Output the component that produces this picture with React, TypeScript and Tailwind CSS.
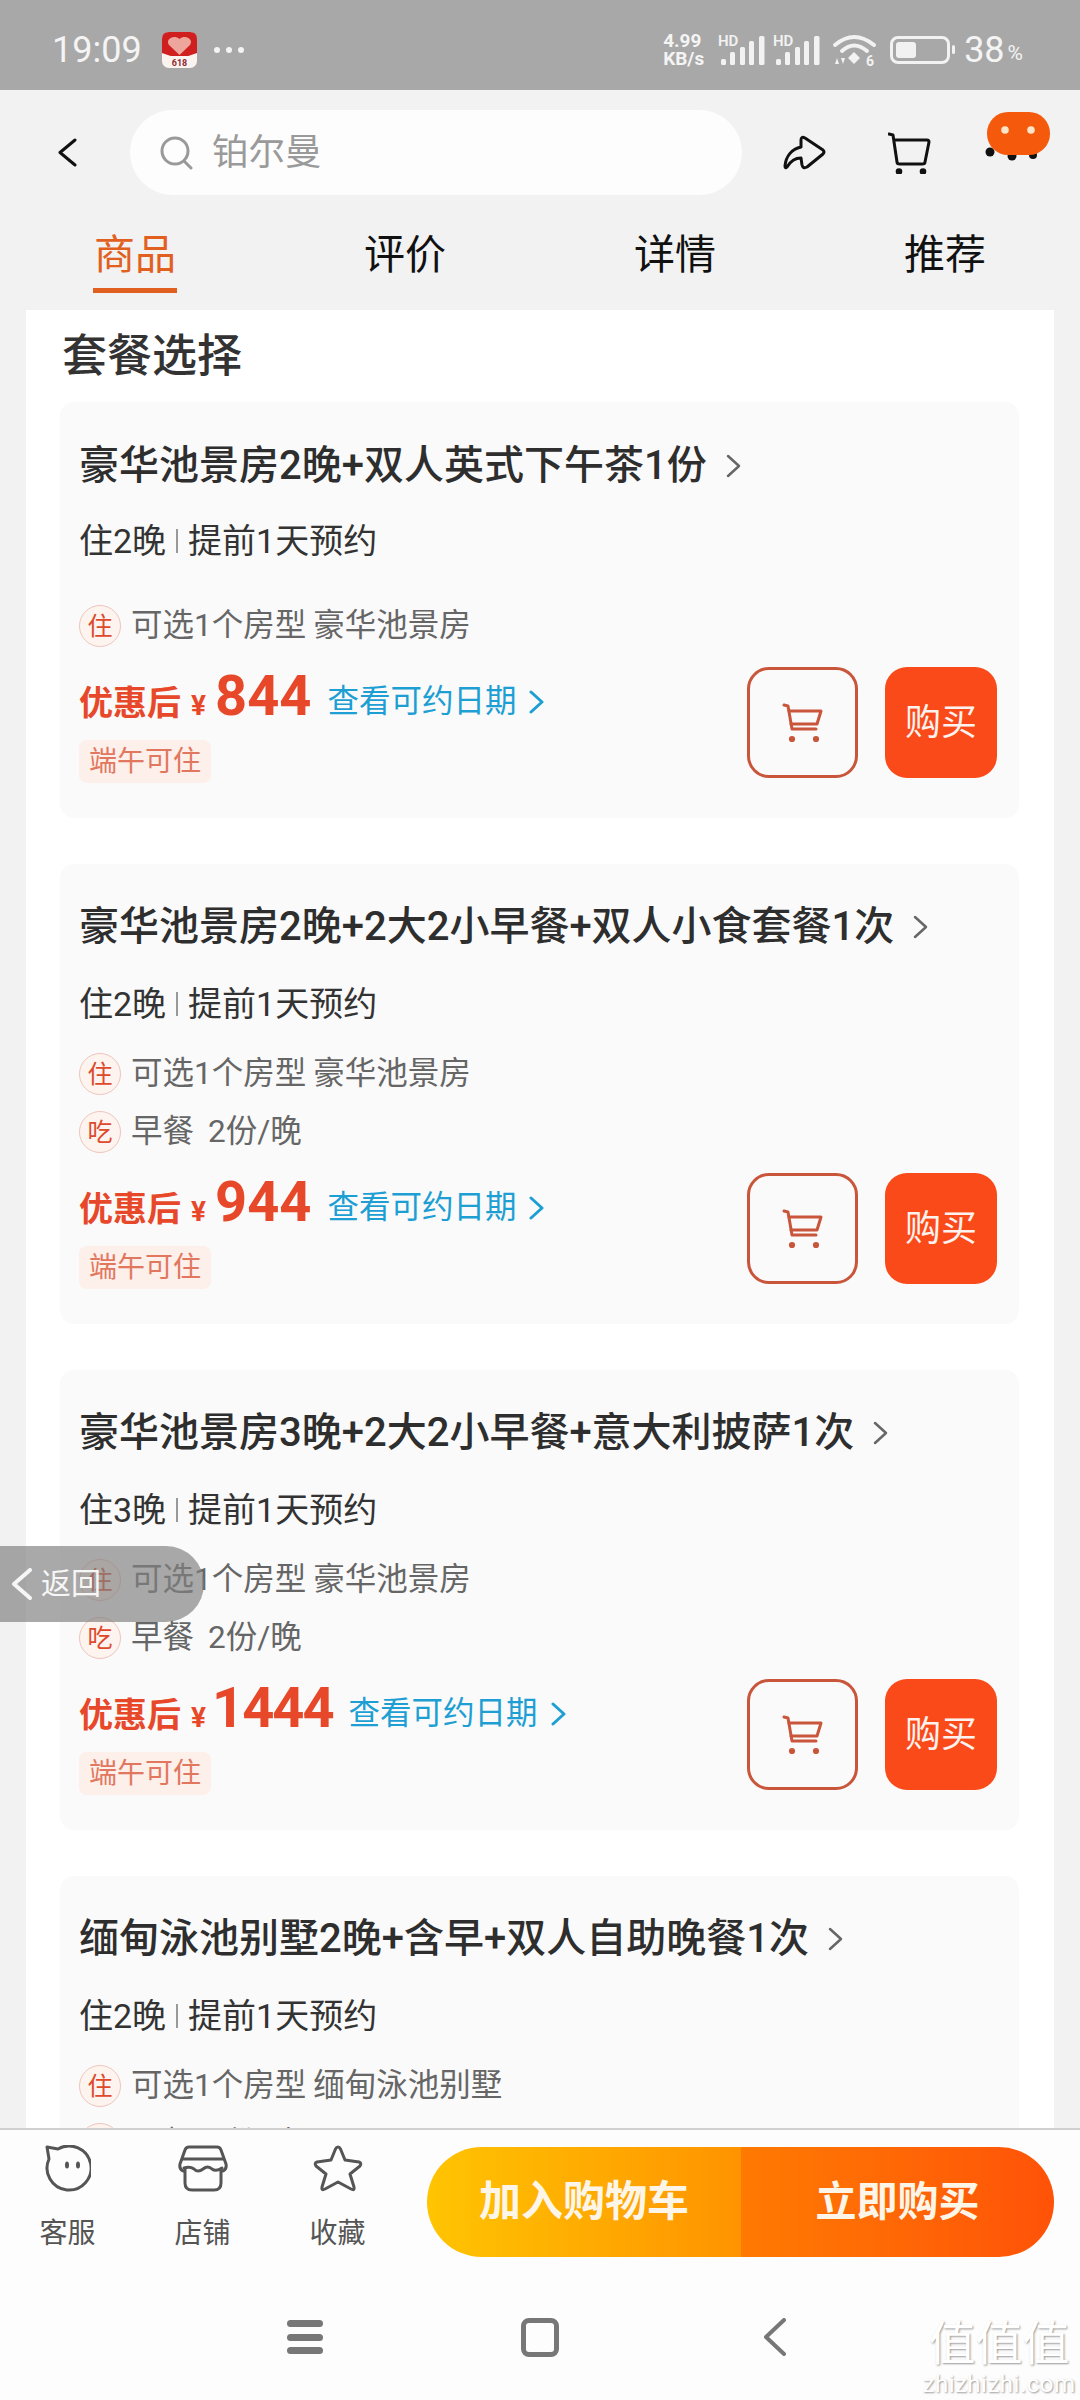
import React from "react";

function Chevron({ className, color = "#666", w = 15, h = 24, sw = 2.5 }: { className?: string; color?: string; w?: number; h?: number; sw?: number }) {
  return (
    <svg className={className} width={w} height={h} viewBox={`0 0 ${w} ${h}`} fill="none">
      <polyline points={`2,2 ${w - 2},${h / 2} 2,${h - 2}`} stroke={color} strokeWidth={sw} strokeLinecap="round" strokeLinejoin="round" />
    </svg>
  );
}

function BackChevron({ w, h, color, sw }: { w: number; h: number; color: string; sw: number }) {
  return (
    <svg className="shrink-0" width={w} height={h} viewBox={`0 0 ${w} ${h}`} fill="none">
      <polyline points={`${w - 2},2 2,${h / 2} ${w - 2},${h - 2}`} stroke={color} strokeWidth={sw} strokeLinecap="round" strokeLinejoin="round" />
    </svg>
  );
}

function Signal() {
  return (
    <svg className="overflow-visible" width="47" height="32" viewBox="0 0 47 32" fill="#f2f2f2">
      <text x="0" y="12" fontSize="15" fontWeight="600" fontFamily="Roboto, sans-serif" fill="#f2f2f2">HD</text>
      <rect x="3" y="25" width="5" height="6" rx="1.5" />
      <rect x="12" y="18" width="5" height="13" rx="1.5" />
      <rect x="22" y="13" width="5" height="18" rx="1.5" />
      <rect x="31" y="7" width="5" height="24" rx="1.5" />
      <rect x="41" y="2" width="5.5" height="29" rx="1.5" />
    </svg>
  );
}

function Wifi() {
  return (
    <svg className="overflow-visible" width="44" height="34" viewBox="0 0 44 34" fill="none">
      <path d="M2 12 Q21 -4 41 12" stroke="#f2f2f2" strokeWidth="4" strokeLinecap="round" />
      <path d="M9 18 Q21 7 34 18" stroke="#f2f2f2" strokeWidth="4" strokeLinecap="round" />
      <path d="M15 25 L21 19 L27 25 L21 31Z" fill="#f2f2f2" />
      <path d="M2 31 L4 25 L6 31Z M8 25 L10 31 L12 25Z" fill="#f2f2f2" />
      <text x="33" y="33" fontSize="14" fontWeight="700" fontFamily="Roboto, sans-serif" fill="#f2f2f2">6</text>
    </svg>
  );
}

function AppIcon() {
  return (
    <svg width="35" height="36" viewBox="0 0 35 36">
      <rect x="0" y="0" width="35" height="36" rx="7" fill="#fbf3ef" />
      <path d="M0 24 V7 Q0 0 7 0 H28 Q35 0 35 7 V24 L17.5 24Z" fill="#cf1f1f" />
      <path d="M17.5 23 L7 13 C3 7 12 2 17.5 7 C23 2 32 7 28 13Z" fill="#eea69c" />
      <path d="M0 21 L17.5 27 L35 21 V24 H0Z" fill="#fbf3ef" />
      <text x="17.5" y="34" textAnchor="middle" fontSize="9" fontWeight="700" fontFamily="Roboto, sans-serif" fill="#8e2a33">618</text>
    </svg>
  );
}

function CartSmall() {
  return (
    <svg width="41" height="40" viewBox="0 0 41 40" fill="none" stroke="#c9553b" strokeWidth="3" strokeLinecap="round" strokeLinejoin="round">
      <path d="M2 2 L6 3 L10 26 L34 26" />
      <path d="M7 8 L39 8 L35 21 L9 21" />
      <circle cx="10" cy="36" r="1.6" fill="#c9553b" />
      <circle cx="34" cy="36" r="1.6" fill="#c9553b" />
    </svg>
  );
}

function Badge({ t }: { t: string }) {
  return (
    <span className="flex h-[42px] w-[42px] shrink-0 items-center justify-center rounded-full border border-[#eec6ba] bg-[#fdf4f0] text-[25px] leading-none text-[#dd4a2c]">
      {t}
    </span>
  );
}

type Pkg = {
  title: string;
  nights: string;
  price: string;
  rows: { badge: string; parts: string[] }[];
  first?: boolean;
};

const pkgs: Pkg[] = [
  { title: "豪华池景房2晚+双人英式下午茶1份", nights: "住2晚", price: "844", first: true, rows: [{ badge: "住", parts: ["可选1个房型", "豪华池景房"] }] },
  { title: "豪华池景房2晚+2大2小早餐+双人小食套餐1次", nights: "住2晚", price: "944", rows: [{ badge: "住", parts: ["可选1个房型", "豪华池景房"] }, { badge: "吃", parts: ["早餐", "2份/晚"] }] },
  { title: "豪华池景房3晚+2大2小早餐+意大利披萨1次", nights: "住3晚", price: "1444", rows: [{ badge: "住", parts: ["可选1个房型", "豪华池景房"] }, { badge: "吃", parts: ["早餐", "2份/晚"] }] },
  { title: "缅甸泳池别墅2晚+含早+双人自助晚餐1次", nights: "住2晚", price: "", rows: [{ badge: "住", parts: ["可选1个房型", "缅甸泳池别墅"] }, { badge: "吃", parts: ["早餐", "2份/晚"] }] },
];

function Card({ p }: { p: Pkg }) {
  return (
    <div className={p.first ? "shrink-0 rounded-[14px] bg-[#fafafa] pl-[19px] pr-[22px] pt-[41px] pb-[35px]" : "shrink-0 rounded-[14px] bg-[#fafafa] pl-[19px] pr-[22px] pt-[40px] pb-[35px]"}>
      <div className="flex h-[46px] items-center">
        <span className="text-[40px] leading-[46px] font-medium text-[#2e2e2e]">{p.title}</span>
        <Chevron className="ml-[19px] shrink-0" />
      </div>
      <div className={p.first ? "mt-[32px] flex h-[40px] items-center text-[34px] leading-[40px] text-[#333333]" : "mt-[34px] flex h-[40px] items-center text-[34px] leading-[40px] text-[#333333]"}>
        <span>{p.nights}</span>
        <span className="mx-[10px] h-[24px] w-[2px] bg-[#999999]" />
        <span>提前1天预约</span>
      </div>
      <div className={p.first ? "mt-[44px] flex flex-col gap-[16px]" : "mt-[29px] flex flex-col gap-[16px]"}>
        {p.rows.map((r) => (
          <div key={r.badge} className="flex h-[42px] items-center gap-[10px] text-[31.5px] leading-[42px] text-[#666666]">
            <Badge t={r.badge} />
            <span className={r.badge === "吃" ? "flex gap-[14px]" : "flex gap-[7px]"}>
              {r.parts.map((x) => (
                <span key={x}>{x}</span>
              ))}
            </span>
          </div>
        ))}
      </div>
      {p.price && (
        <div className="mt-[20px] flex items-start justify-between">
          <div className="flex flex-col">
            <div className="flex h-[64px] items-center">
              <div className="flex items-baseline">
                <span className="text-[34px] leading-[64px] font-bold text-[#e8482a]">优惠后</span>
                <span className="ml-[10px] text-[28px] font-bold text-[#e8482a]">¥</span>
                <span className={p.price === "1444" ? "ml-[6px] text-[56px] leading-[64px] font-bold tracking-[-2px] text-[#e8482a]" : "ml-[9px] text-[56px] leading-[64px] font-bold text-[#e8482a]"}>{p.price}</span>
              </div>
              <span className="ml-[16px] mt-[5px] text-[31.5px] text-[#1d9fd3]">查看可约日期</span>
              <Chevron className="ml-[13px] mt-[5px]" color="#1d9fd3" w={15} h={24} sw={3} />
            </div>
            <div className="mt-[9px] flex h-[43px] w-[132px] items-center justify-center rounded-[8px] bg-[#fdefea] text-[28px] leading-none text-[#e2775f]">
              端午可住
            </div>
          </div>
          <div className="flex gap-[27px]">
            <div className="flex h-[111px] w-[111px] items-center justify-center rounded-[22px] border-[3px] border-[#c9553b]">
              <CartSmall />
            </div>
            <div className="flex h-[111px] w-[112px] items-center justify-center rounded-[22px] bg-[#fb4a1a] text-[36px] leading-none text-[#fdf2ee]">
              购买
            </div>
          </div>
        </div>
      )}
    </div>
  );
}

export default function App() {
  return (
    <div className="relative flex h-[2400px] w-[1080px] flex-col overflow-hidden bg-[#f2f2f2] font-['Roboto','Noto_Sans_CJK_SC',sans-serif]">
      {/* status bar */}
      <div className="flex h-[90px] shrink-0 items-center justify-between bg-[#a8a8a8] pl-[52px] pr-[57px] pt-[9px] text-[#f4f4f4]">
        <div className="flex items-center">
          <span className="w-[110px] text-[36px] leading-none">19:09</span>
          <AppIcon />
          <div className="ml-[17px] flex gap-[6px]">
            <span className="h-[6px] w-[6px] rounded-full bg-[#f4f4f4]" />
            <span className="h-[6px] w-[6px] rounded-full bg-[#f4f4f4]" />
            <span className="h-[6px] w-[6px] rounded-full bg-[#f4f4f4]" />
          </div>
        </div>
        <div className="flex items-center">
          <div className="flex w-[55px] flex-col text-[19px] leading-[18px] font-bold">
            <span>4.99</span>
            <span>KB/s</span>
          </div>
          <Signal />
          <span className="w-[8px]" />
          <Signal />
          <span className="w-[13px]" />
          <Wifi />
          <span className="w-[13px]" />
          <div className="flex items-center">
            <div className="h-[28px] w-[60px] rounded-[8px] border-[3px] border-[#f2f2f2] p-[3px]">
              <div className="h-full w-[20px] rounded-[3px] bg-[#f2f2f2]" />
            </div>
            <span className="ml-[2px] h-[9px] w-[3px] rounded-full bg-[#f2f2f2]" />
          </div>
          <span className="ml-[9px] text-[36px] leading-none">38</span>
          <span className="ml-[3px] mt-[8px] text-[21px] leading-none">%</span>
        </div>
      </div>

      {/* search row */}
      <div className="flex h-[120px] shrink-0 items-center pl-[58px] pt-[5px]">
        <BackChevron w={19} h={29} color="#111111" sw={3} />
        <div className="ml-[53px] flex h-[85px] w-[612px] items-center rounded-full bg-[#fdfdfd] pl-[30px]">
          <svg width="34" height="34" viewBox="0 0 34 34" fill="none" stroke="#999999" strokeWidth="3" strokeLinecap="round">
            <circle cx="15" cy="15" r="13" />
            <path d="M24 25 L31 32" />
          </svg>
          <span className="ml-[18px] mt-[2px] text-[36.5px] leading-none text-[#9a9a9a]">铂尔曼</span>
        </div>
        <svg className="ml-[41px]" width="43" height="35" viewBox="0 0 43 35" fill="none" stroke="#111111" strokeWidth="3" strokeLinejoin="round">
          <path d="M2 31 C3 21 9 14 18 12 L18 5 Q18 1 22 3 L40 15 Q42 17 40 19 L24 32 Q20 34 19 30 L18 23 C12 23 7 27 4 32 Q2 34 2 31Z" />
        </svg>
        <svg className="ml-[62px]" width="43" height="42" viewBox="0 0 43 42" fill="none" stroke="#111111" strokeWidth="3" strokeLinecap="round" strokeLinejoin="round">
          <path d="M1 2 L5 3 L9 30 Q9 32 12 32 L34 32 Q37 32 37 30 L41 10 Q41 8 39 8 L6 8" />
          <circle cx="11" cy="39.5" r="1.8" fill="#111111" />
          <circle cx="35" cy="39.5" r="1.8" fill="#111111" />
        </svg>
      </div>

      {/* overlapping message bubble */}
      <svg className="absolute left-[985px] top-[110px]" width="68" height="52" viewBox="0 0 68 52">
        <circle cx="5" cy="42" r="4.5" fill="#111111" />
        <circle cx="27" cy="46" r="4.5" fill="#111111" />
        <circle cx="48" cy="45" r="4" fill="#111111" />
        <rect x="2" y="2" width="63" height="43" rx="21" fill="#f55a0c" />
        <circle cx="20" cy="20" r="3.8" fill="#fde6c8" />
        <circle cx="46" cy="20" r="3.8" fill="#fde6c8" />
      </svg>

      {/* tabs */}
      <div className="grid h-[100px] shrink-0 grid-cols-4 pt-[19px]">
        {["商品", "评价", "详情", "推荐"].map((t, i) => (
          <div key={t} className="flex flex-col items-center">
            <span className={i === 0 ? "text-[41px] leading-[52px] text-[#e2601f]" : "text-[41px] leading-[52px] text-[#111111]"}>{t}</span>
            {i === 0 && <span className="mt-[7px] h-[5px] w-[84px] bg-[#e2601f]" />}
          </div>
        ))}
      </div>

      {/* content */}
      <div className="min-h-0 flex-1 overflow-hidden px-[26px]">
        <div className="h-full overflow-hidden bg-white pl-[34px] pr-[35px] pt-[17px]">
          <h2 className="mb-[15px] ml-[2px] text-[45px] leading-[60px] font-medium text-[#333333]">套餐选择</h2>
          <div className="flex flex-col gap-[46px]">
            {pkgs.map((p) => (
              <Card key={p.title} p={p} />
            ))}
          </div>
        </div>
      </div>

      {/* floating back */}
      <div className="absolute left-0 top-[1546px] flex h-[76px] w-[204px] items-center rounded-r-[38px] bg-[rgba(128,128,128,0.68)] pl-[12px]">
        <BackChevron w={20} h={32} color="#f6f6f6" sw={4} />
        <span className="ml-[9px] text-[30px] leading-none text-[#f6f6f6]">返回</span>
      </div>

      {/* bottom action bar */}
      <div className="h-[272px] shrink-0 border-t-2 border-[#cfcfcf] bg-[#fdfdfd]">
        <div className="flex h-[127px] items-start">
          <div className="flex w-[135px] flex-col items-center pt-[15px]">
            <svg width="46" height="47" viewBox="0 0 46 47" fill="none" stroke="#555555" strokeWidth="3" strokeLinejoin="round">
              <path d="M2 2 L13 4 A22 22 0 1 1 4 14 Z" />
              <ellipse cx="22" cy="20" rx="2" ry="3.5" fill="#555555" stroke="none" />
              <ellipse cx="33" cy="20" rx="2" ry="3.5" fill="#555555" stroke="none" />
            </svg>
            <span className="mt-[27px] text-[28px] leading-[30px] text-[#555555]">客服</span>
          </div>
          <div className="flex w-[135px] flex-col items-center pt-[15px]">
            <svg width="50" height="47" viewBox="0 0 50 47" fill="none" stroke="#555555" strokeWidth="3" strokeLinejoin="round" strokeLinecap="round">
              <path d="M11 2 H39 Q42 2 43 5 L48 19 Q49 24 45 26 M11 2 Q8 2 7 5 L2 19 Q1 24 5 26" />
              <path d="M5 14 H45" />
              <path d="M6 23 Q12 21 16 24 Q20 28 25 24 Q30 20 34 24 Q38 27 44 23" />
              <path d="M7 24 V38 Q7 45 14 45 H36 Q43 45 43 38 V24" />
            </svg>
            <span className="mt-[27px] text-[28px] leading-[30px] text-[#555555]">店铺</span>
          </div>
          <div className="flex w-[135px] flex-col items-center pt-[15px]">
            <svg width="50" height="47" viewBox="0 0 50 47" fill="none" stroke="#555555" strokeWidth="3" strokeLinejoin="round">
              <path d="M25 2 Q26.5 2 27.5 4 L32 15 L46 17 Q49 18 47 21 L37 29 L41 42 Q42 46 38 44 L25 37 L12 44 Q8 46 9 42 L13 29 L3 21 Q1 18 4 17 L18 15 L22.5 4 Q23.5 2 25 2Z" />
            </svg>
            <span className="mt-[27px] text-[28px] leading-[30px] text-[#555555]">收藏</span>
          </div>
          <div className="ml-auto mr-[26px] mt-[17px] flex h-[110px] w-[627px] overflow-hidden rounded-full">
            <div className="flex w-[314px] items-center justify-center bg-gradient-to-r from-[#ffc402] to-[#ff9300] text-[42px] leading-none font-bold text-[#fdf6e8]">
              加入购物车
            </div>
            <div className="flex flex-1 items-center justify-center bg-gradient-to-r from-[#ff7a02] to-[#ff5208] text-[41px] leading-none font-bold text-[#fdf6e8]">
              立即购买
            </div>
          </div>
        </div>
        <div className="flex justify-center pt-[61px]">
          <div className="flex w-[235px] justify-center pt-[2px]">
            <div className="flex h-[34px] w-[36px] flex-col justify-between">
              <span className="h-[7px] rounded-full bg-[#777777]" />
              <span className="h-[7px] rounded-full bg-[#777777]" />
              <span className="h-[7px] rounded-full bg-[#777777]" />
            </div>
          </div>
          <div className="flex w-[235px] justify-center">
            <div className="h-[39px] w-[38px] rounded-[8px] border-[5px] border-[#777777]" />
          </div>
          <div className="flex w-[235px] justify-center">
            <BackChevron w={22} h={38} color="#777777" sw={4} />
          </div>
        </div>
      </div>

      {/* watermark */}
      <div className="absolute left-[927px] top-[2316px] flex w-[144px] flex-col items-center text-white">
        <span className="text-[47px] leading-[56px] [text-shadow:1px_1px_2px_#999999]">值值值</span>
        <span className="text-[24px] leading-[24px] tracking-[0.5px] [text-shadow:1px_1px_2px_#999999]">zhizhizhi.com</span>
      </div>
    </div>
  );
}
